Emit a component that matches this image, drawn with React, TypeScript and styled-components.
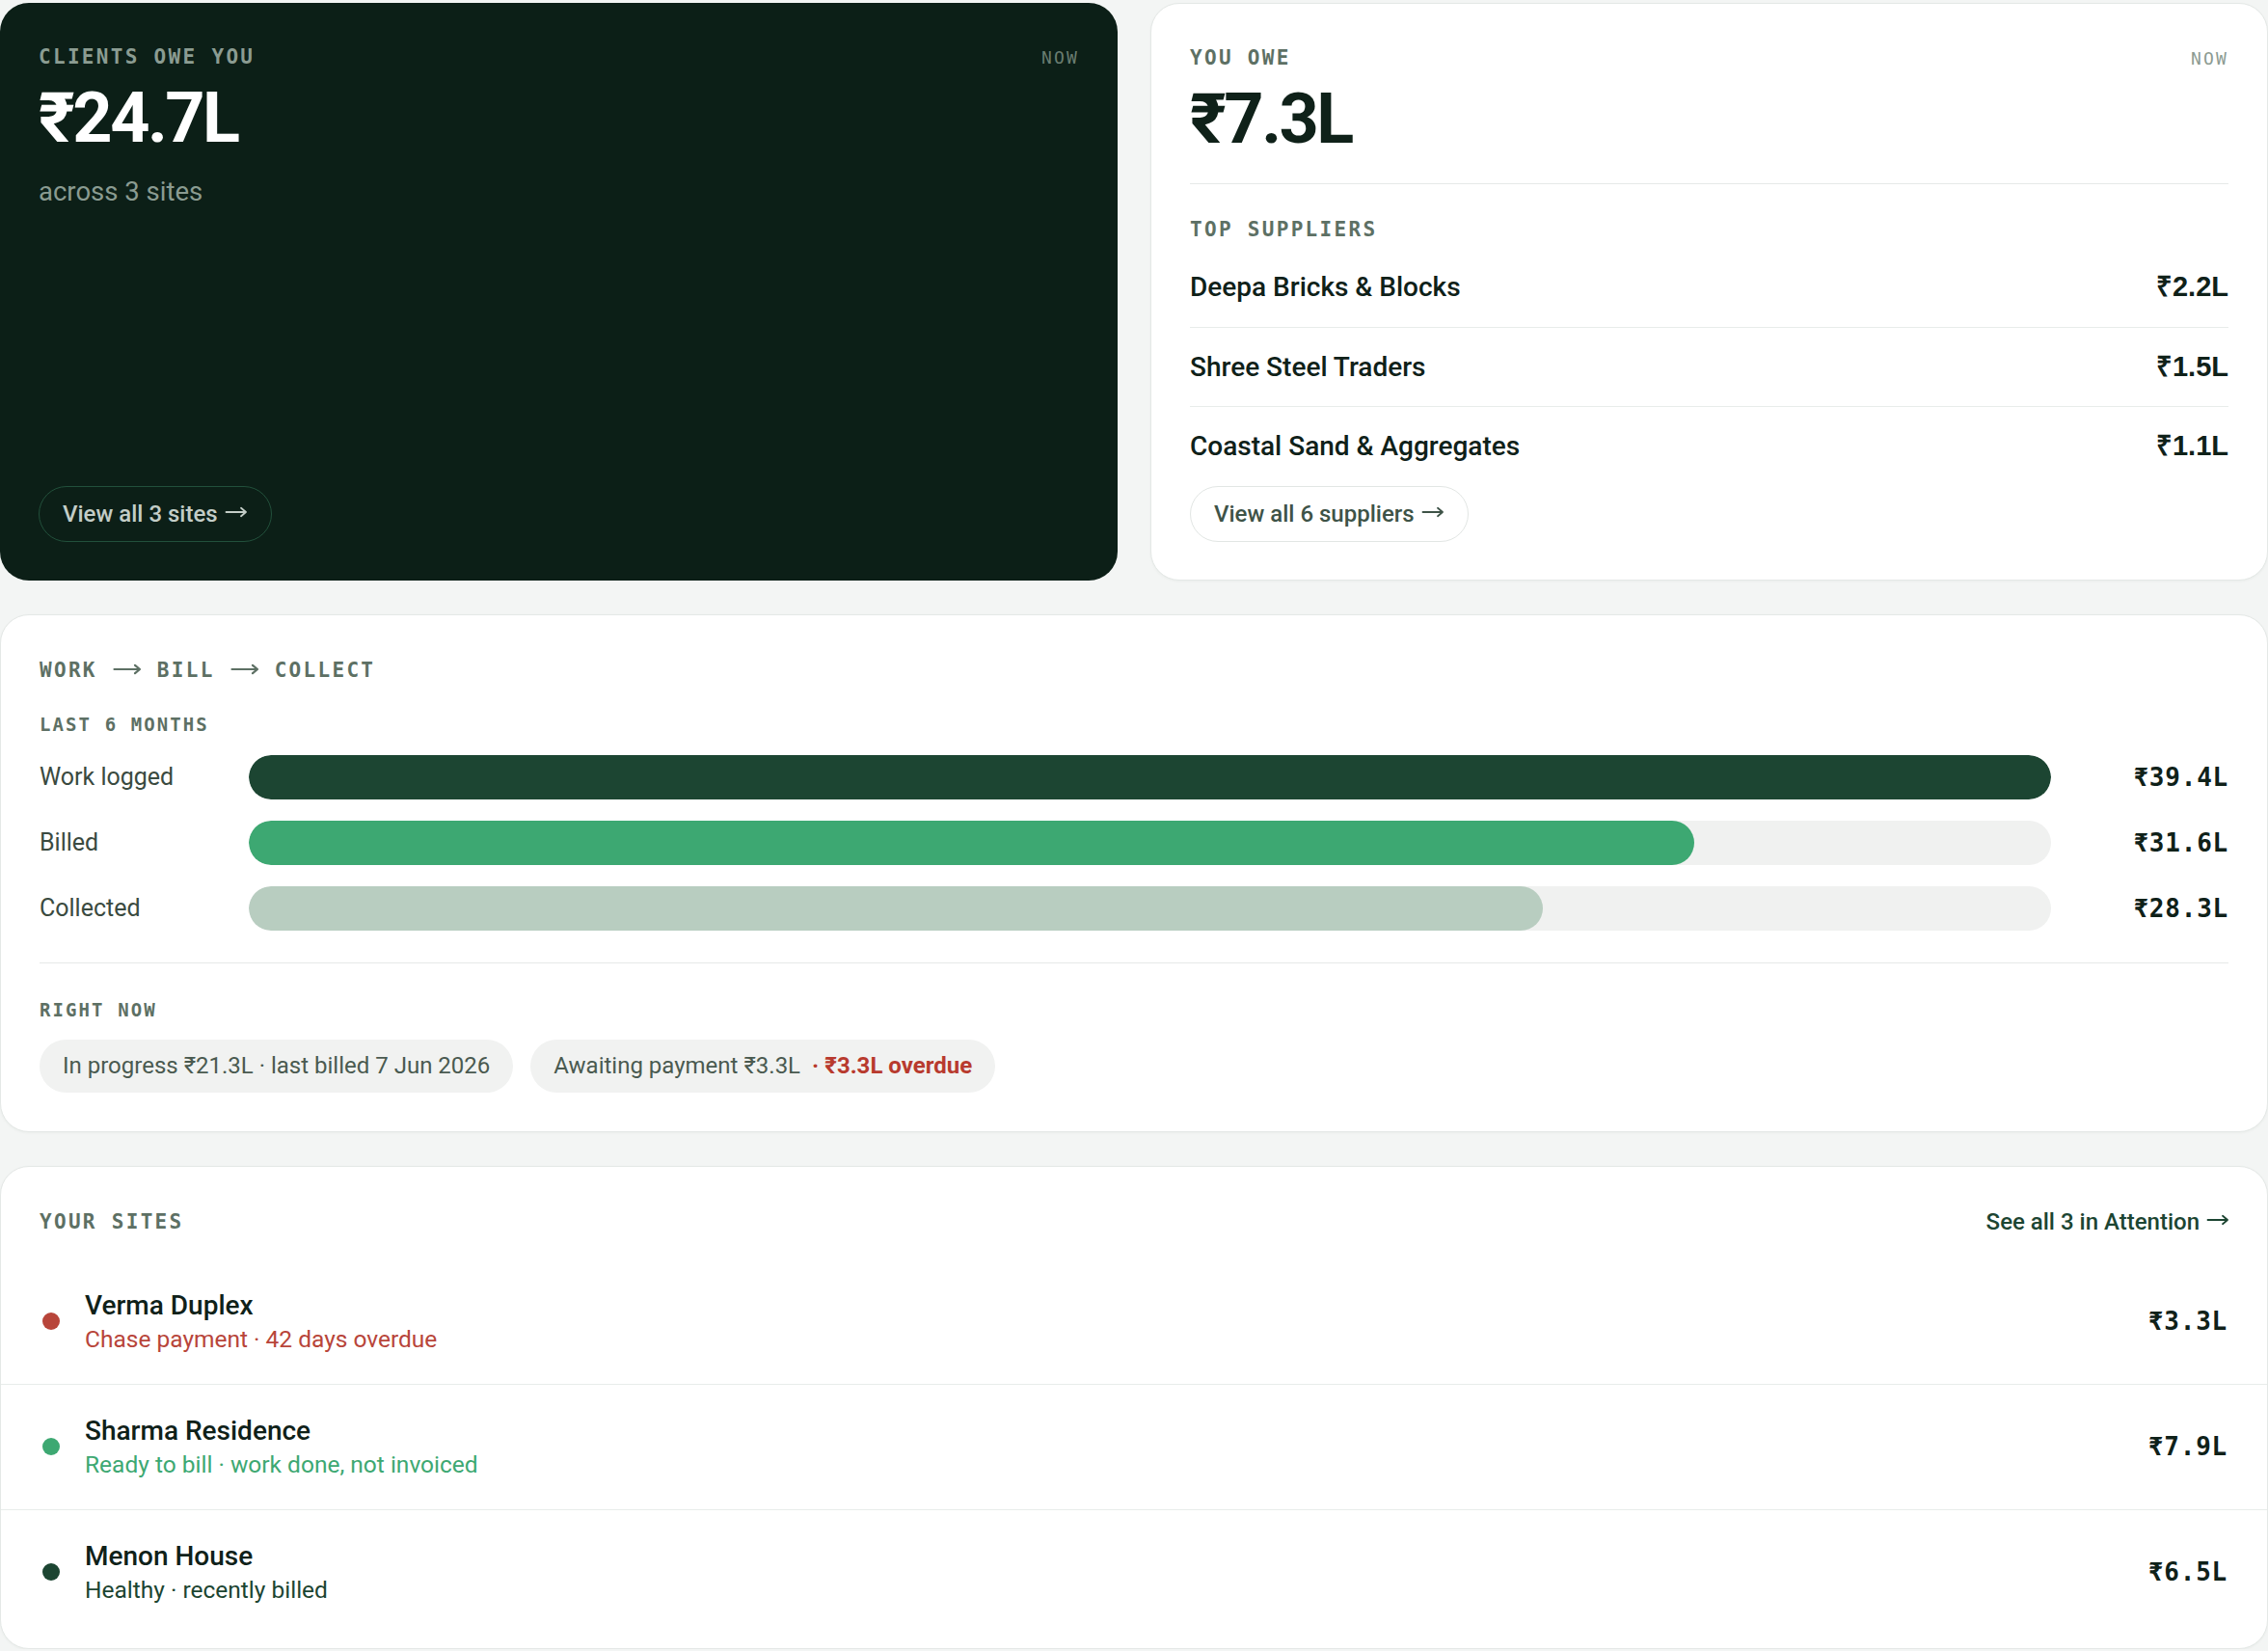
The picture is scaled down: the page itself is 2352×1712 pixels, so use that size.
import React from 'react';
import styled, { createGlobalStyle, css } from 'styled-components';

const sans = `Roboto, "Noto Sans", "DejaVu Sans", sans-serif`;
const mono = `"DejaVu Sans Mono", "Liberation Mono", monospace`;

const colors = {
  page: '#f3f5f4',
  night: '#0c1f17',
  ink: '#0f2119',
  muted: '#5d7064',
  border: '#e4e8e6',
  forest: '#1c4532',
  leaf: '#3da872',
  sage: '#b8cdc0',
  track: '#f0f1f0',
  red: '#b8453a',
};

const GlobalStyle = createGlobalStyle`
  body {
    margin: 0;
    background: ${colors.page};
    font-family: ${sans};
    color: ${colors.ink};
  }
`;

const Page = styled.div`
  display: flex;
  flex-direction: column;
  gap: 35px;
  padding-top: 3px;
  width: 2352px;
`;

const TopRow = styled.div`
  display: grid;
  grid-template-columns: 1fr 1fr;
  gap: 34px;
`;

const Card = styled.section<{ $dark?: boolean }>`
  display: flex;
  flex-direction: column;
  border-radius: 30px;
  ${({ $dark }) =>
    $dark
      ? css`
          background: ${colors.night};
          padding: 42px 40px 40px;
        `
      : css`
          background: #fff;
          border: 1px solid ${colors.border};
          box-shadow: 0 1px 3px rgba(16, 40, 28, 0.04);
          padding: 42px 40px 39px;
        `}
`;

const HeadRow = styled.div`
  display: flex;
  align-items: center;
  justify-content: space-between;
`;

const Eyebrow = styled.div<{ $small?: boolean; $dark?: boolean }>`
  font-family: ${mono};
  font-weight: 700;
  font-size: ${({ $small }) => ($small ? '19px' : '21px')};
  line-height: ${({ $small }) => ($small ? '26px' : '28px')};
  letter-spacing: 0.11em;
  text-transform: uppercase;
  color: ${({ $dark }) => ($dark ? '#8b9c92' : colors.muted)};
`;

const ArrowSvg = styled.svg<{ $gap: number }>`
  display: inline-block;
  vertical-align: middle;
  margin: -3px ${({ $gap }) => $gap}px 0;
  overflow: visible;
`;

// thin long arrow used after link labels and between flow steps
const LongArrow = ({ w = 22, gap = 0, stroke = 1.8 }: { w?: number; gap?: number; stroke?: number }) => (
  <ArrowSvg $gap={gap} width={w} height={12} viewBox={`0 0 ${w} 12`} fill="none" aria-hidden>
    <path
      d={`M0.5 6H${w - 1}M${w - 6} 1.8L${w - 1} 6L${w - 6} 10.2`}
      stroke="currentColor"
      strokeWidth={stroke}
      strokeLinecap="round"
      strokeLinejoin="round"
    />
  </ArrowSvg>
);

const NowTag = styled.span<{ $dark?: boolean }>`
  font-family: ${mono};
  font-size: 18px;
  letter-spacing: 0.12em;
  color: ${({ $dark }) => ($dark ? '#6a7d71' : '#8c9b92')};
`;

const BigFigure = styled.div<{ $dark?: boolean }>`
  margin-top: 14px;
  font-family: ${sans};
  font-weight: 700;
  font-size: 72px;
  line-height: 72px;
  letter-spacing: -0.035em;
  color: ${({ $dark }) => ($dark ? '#ffffff' : colors.ink)};
`;

const Caption = styled.div`
  margin-top: 22px;
  font-size: 27.5px;
  line-height: 36px;
  color: #8a9b91;
`;

const OutlineButton = styled.button<{ $dark?: boolean }>`
  align-self: flex-start;
  display: inline-flex;
  align-items: center;
  gap: 8px;
  font-family: ${sans};
  font-weight: 500;
  font-size: 24px;
  line-height: 26px;
  padding: 15px 25px 15px 24px;
  border-radius: 999px;
  cursor: pointer;
  ${({ $dark }) =>
    $dark
      ? css`
          margin-top: auto;
          background: transparent;
          border: 1.5px solid #22503b;
          color: #c3cdc7;
        `
      : css`
          background: #fff;
          border: 1.5px solid #e2e6e4;
          color: #3e5347;
        `}
`;

const Rule = styled.hr`
  margin: 30px 0 0;
  border: 0;
  border-top: 1px solid #e6e9e8;
`;

const SectionLabel = styled(Eyebrow)`
  margin-top: 33px;
`;

const SupplierList = styled.ul`
  list-style: none;
  margin: 5px 0 0;
  padding: 0;
`;

const SupplierRow = styled.li`
  display: flex;
  align-items: center;
  justify-content: space-between;
  padding: 23px 0;
  line-height: 35.5px;
  border-bottom: 1px solid #e8ecea;

  &:last-child {
    border-bottom: 0;
  }
`;

const SupplierName = styled.span`
  font-size: 28px;
  font-weight: 500;
  color: ${colors.ink};
`;

const SupplierAmount = styled.span`
  font-family: "Liberation Sans", Arial, sans-serif;
  font-weight: 700;
  font-size: 29px;
  color: ${colors.ink};
`;

const WideCard = styled.section<{ $flush?: boolean }>`
  background: #fff;
  border: 1px solid ${colors.border};
  border-radius: 30px;
  box-shadow: 0 1px 3px rgba(16, 40, 28, 0.04);
  padding: ${({ $flush }) => ($flush ? '43px 0 14px' : '43px 40px 40px')};
`;

const BarGrid = styled.div`
  display: grid;
  grid-template-columns: 193px 1fr 160px;
  column-gap: 24px;
  row-gap: 22px;
  align-items: center;
  margin-top: 19px;
`;

const BarLabel = styled.span`
  font-size: 25px;
  line-height: 30px;
  color: #3a4a40;
`;

const Track = styled.div`
  height: 46px;
  border-radius: 999px;
  background: ${colors.track};
  overflow: hidden;
`;

const Fill = styled.div<{ $color: string }>`
  height: 100%;
  border-radius: 999px;
  background: ${({ $color }) => $color};
`;

const MonoAmount = styled.span`
  font-family: ${mono};
  font-weight: 700;
  font-size: 26px;
  line-height: 30px;
  letter-spacing: 0.03em;
  text-align: right;
  color: ${colors.ink};
`;

const FlowRule = styled(Rule)`
  margin-top: 33px;
`;

const RightNowLabel = styled(Eyebrow)`
  margin-top: 35px;
`;

const Chips = styled.div`
  display: flex;
  gap: 18px;
  margin-top: 18px;
`;

const Chip = styled.span`
  font-size: 24px;
  line-height: 27px;
  padding: 14px 24px;
  border-radius: 999px;
  background: #f1f2f1;
  color: #4a5a50;
`;

const Overdue = styled.span`
  margin-left: 12px;
  font-weight: 700;
  color: #b83a2e;
`;

const SitesHeader = styled(HeadRow)`
  padding: 0 40px;
`;

const SeeAll = styled.a`
  display: inline-flex;
  align-items: center;
  gap: 8px;
  font-size: 24px;
  line-height: 28px;
  font-weight: 500;
  color: ${colors.forest};
  text-decoration: none;
`;

const SiteList = styled.ul`
  list-style: none;
  margin: 25px 0 0;
  padding: 0;
`;

const SiteRow = styled.li`
  display: flex;
  align-items: center;
  height: 129px;
  padding: 0 41px 0 43px;
  border-bottom: 1px solid #e8ecea;

  &:last-child {
    border-bottom: 0;
  }
`;

const Dot = styled.span<{ $color: string }>`
  width: 18px;
  height: 18px;
  border-radius: 50%;
  flex-shrink: 0;
  background: ${({ $color }) => $color};
`;

const SiteInfo = styled.div`
  display: flex;
  flex-direction: column;
  margin-left: 26px;
  padding-top: 2px;
  flex: 1;
`;

const SiteName = styled.span`
  font-size: 28px;
  line-height: 36px;
  font-weight: 500;
  color: ${colors.ink};
`;

const SiteNote = styled.span<{ $color: string }>`
  font-size: 24.5px;
  line-height: 34px;
  color: ${({ $color }) => $color};
`;

const suppliers = [
  { name: 'Deepa Bricks & Blocks', amount: '₹2.2L' },
  { name: 'Shree Steel Traders', amount: '₹1.5L' },
  { name: 'Coastal Sand & Aggregates', amount: '₹1.1L' },
];

const flow = [
  { label: 'Work logged', value: 39.4, color: colors.forest },
  { label: 'Billed', value: 31.6, color: colors.leaf },
  { label: 'Collected', value: 28.3, color: colors.sage },
];

const sites = [
  { name: 'Verma Duplex', note: 'Chase payment · 42 days overdue', amount: '₹3.3L', dot: '#b8453a', tone: colors.red },
  { name: 'Sharma Residence', note: 'Ready to bill · work done, not invoiced', amount: '₹7.9L', dot: colors.leaf, tone: colors.leaf },
  { name: 'Menon House', note: 'Healthy · recently billed', amount: '₹6.5L', dot: colors.forest, tone: colors.forest },
];

export default function App() {
  const maxFlow = Math.max(...flow.map((f) => f.value));

  return (
    <>
      <GlobalStyle />
      <Page>
        <TopRow>
          <Card $dark>
            <HeadRow>
              <Eyebrow $dark>Clients owe you</Eyebrow>
              <NowTag $dark>NOW</NowTag>
            </HeadRow>
            <BigFigure $dark>₹24.7L</BigFigure>
            <Caption>across 3 sites</Caption>
            <OutlineButton $dark>
              View all 3 sites
              <LongArrow />
            </OutlineButton>
          </Card>

          <Card>
            <HeadRow>
              <Eyebrow>You owe</Eyebrow>
              <NowTag>NOW</NowTag>
            </HeadRow>
            <BigFigure>₹7.3L</BigFigure>
            <Rule />
            <SectionLabel>Top suppliers</SectionLabel>
            <SupplierList>
              {suppliers.map((s) => (
                <SupplierRow key={s.name}>
                  <SupplierName>{s.name}</SupplierName>
                  <SupplierAmount>{s.amount}</SupplierAmount>
                </SupplierRow>
              ))}
            </SupplierList>
            <OutlineButton>
              View all 6 suppliers
              <LongArrow />
            </OutlineButton>
          </Card>
        </TopRow>

        <WideCard>
          <Eyebrow>
            Work<LongArrow w={28} gap={17} stroke={2.2} />Bill<LongArrow w={28} gap={17} stroke={2.2} />Collect
          </Eyebrow>
          <Eyebrow $small style={{ marginTop: 29 }}>Last 6 months</Eyebrow>
          <BarGrid>
            {flow.map((f) => (
              <React.Fragment key={f.label}>
                <BarLabel>{f.label}</BarLabel>
                <Track>
                  <Fill $color={f.color} style={{ width: `${(f.value / maxFlow) * 100}%` }} />
                </Track>
                <MonoAmount>₹{f.value.toFixed(1)}L</MonoAmount>
              </React.Fragment>
            ))}
          </BarGrid>
          <FlowRule />
          <RightNowLabel $small>Right now</RightNowLabel>
          <Chips>
            <Chip>In progress ₹21.3L · last billed 7 Jun 2026</Chip>
            <Chip>
              Awaiting payment ₹3.3L
              <Overdue>· ₹3.3L overdue</Overdue>
            </Chip>
          </Chips>
        </WideCard>

        <WideCard $flush>
          <SitesHeader>
            <Eyebrow>Your sites</Eyebrow>
            <SeeAll href="#">
              See all 3 in Attention
              <LongArrow />
            </SeeAll>
          </SitesHeader>
          <SiteList>
            {sites.map((s) => (
              <SiteRow key={s.name}>
                <Dot $color={s.dot} />
                <SiteInfo>
                  <SiteName>{s.name}</SiteName>
                  <SiteNote $color={s.tone}>{s.note}</SiteNote>
                </SiteInfo>
                <MonoAmount>{s.amount}</MonoAmount>
              </SiteRow>
            ))}
          </SiteList>
        </WideCard>
      </Page>
    </>
  );
}
